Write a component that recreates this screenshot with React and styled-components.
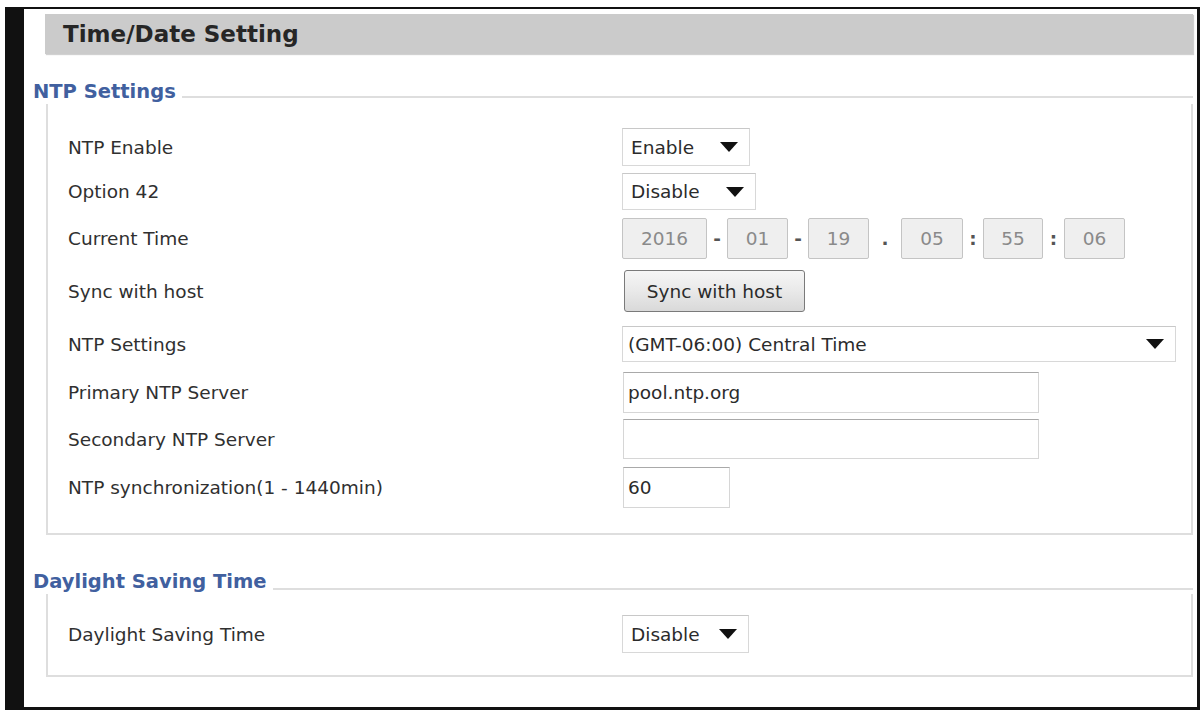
import React from 'react';
import styled, { createGlobalStyle } from 'styled-components';

const GlobalStyle = createGlobalStyle`
  html, body {
    margin: 0;
    padding: 0;
    background: #fff;
  }
  body {
    font-family: "DejaVu Sans", Verdana, sans-serif;
    color: #333;
  }
`;

const Frame = styled.div`
  box-sizing: border-box;
  width: 1195px;
  height: 703px;
  margin: 7px 0 0 5px;
  border-style: solid;
  border-color: #111;
  border-width: 2px 3px 3px 19px;
  padding: 5px 4px 0 9px;
  background: #fff;
`;

const Header = styled.div`
  margin-left: 12px;
  height: 40px;
  display: flex;
  align-items: center;
  padding-left: 18px;
  background: #cbcbcb;
  box-shadow: 1px 1px 1px rgba(0, 0, 0, 0.18);
  font-size: 23px;
  font-weight: bold;
  color: #262626;
`;

const LegendRow = styled.div`
  display: flex;
  align-items: flex-end;
  height: 24px;
  margin-top: ${p => p.$top}px;
`;

const LegendText = styled.div`
  font-size: 19.5px;
  font-weight: bold;
  line-height: 24px;
  color: #41609f;
  white-space: nowrap;
`;

const Rule = styled.div`
  flex: 1;
  margin: 0 0 ${p => p.$lift || 6}px 6px;
  border-bottom: 2px solid #dedede;
`;

const Box = styled.div`
  margin-left: 13px;
  border: 2px solid #dedede;
  border-top: none;
  padding: ${p => p.$top}px 0 ${p => p.$bottom}px 20px;
  display: flex;
  flex-direction: column;
`;

const Row = styled.div`
  display: flex;
  align-items: center;
  margin-top: ${p => p.$gap || 0}px;
`;

const Label = styled.div`
  width: 554px;
  flex-shrink: 0;
  font-size: 18.5px;
  color: #303030;
`;

const SelectBox = styled.div`
  box-sizing: border-box;
  width: ${p => p.$w}px;
  height: ${p => p.$h}px;
  display: flex;
  align-items: center;
  justify-content: space-between;
  padding: 0 11px 0 ${p => p.$left || 8}px;
  border: 1px solid #d8d8d8;
  border-top-color: #c8c8c8;
  background: #fff;
  font-size: 18.5px;
  color: #2b2b2b;
`;

const Caret = () => (
  <svg width="18" height="10" viewBox="0 0 18 10">
    <polygon points="0,0 18,0 9,10" fill="#111" />
  </svg>
);

const Select = ({ value, w, h, left }) => (
  <SelectBox $w={w} $h={h} $left={left}>
    <span>{value}</span>
    <Caret />
  </SelectBox>
);

const TimeRow = styled.div`
  display: flex;
  align-items: center;
`;

const TimeField = styled.div`
  box-sizing: border-box;
  width: ${p => p.$w}px;
  height: 41px;
  display: flex;
  align-items: center;
  justify-content: center;
  border: 1px solid #c4c4c4;
  border-radius: 2px;
  background: #efefef;
  font-size: 18.5px;
  color: #8a8a8a;
`;

const Sep = styled.span`
  width: ${p => p.$w}px;
  text-align: center;
  font-size: 18.5px;
  font-weight: bold;
  color: #555;
`;

const Button = styled.button`
  box-sizing: border-box;
  width: 181px;
  height: 42px;
  margin-left: 2px;
  border: 1px solid #7a7a7a;
  border-radius: 3px;
  background: linear-gradient(#f6f6f6, #e9e9e9 50%, #d9d9d9);
  font-family: "DejaVu Sans", Verdana, sans-serif;
  font-size: 18.5px;
  color: #2b2b2b;
  padding: 0;
`;

const TextInput = styled.input`
  box-sizing: border-box;
  width: ${p => p.$w}px;
  height: ${p => p.$h}px;
  margin: 0 0 0 1px;
  padding: 0 4px;
  border: 1px solid #d6d6d6;
  border-top-color: #a9a9a9;
  outline: none;
  background: #fff;
  font-family: "DejaVu Sans", Verdana, sans-serif;
  font-size: 18.5px;
  color: #2b2b2b;
`;

const timeParts = [
  { v: '2016', w: 85, sep: '-', sw: 20 },
  { v: '01', w: 61, sep: '-', sw: 20 },
  { v: '19', w: 61, sep: '.', sw: 32 },
  { v: '05', w: 62, sep: ':', sw: 20 },
  { v: '55', w: 60, sep: ':', sw: 21 },
  { v: '06', w: 61 },
];

export default function App() {
  return (
    <>
      <GlobalStyle />
      <Frame>
        <Header>Time/Date Setting</Header>

        <LegendRow $top={26}>
          <LegendText>NTP Settings</LegendText>
          <Rule />
        </LegendRow>
        <Box $top={24} $bottom={25}>
          <Row>
            <Label>NTP Enable</Label>
            <Select value="Enable" w={128} h={38} />
          </Row>
          <Row $gap={7}>
            <Label>Option 42</Label>
            <Select value="Disable" w={134} h={37} />
          </Row>
          <Row $gap={8}>
            <Label>Current Time</Label>
            <TimeRow>
              {timeParts.map(p => (
                <React.Fragment key={p.v + p.w}>
                  <TimeField $w={p.w}>{p.v}</TimeField>
                  {p.sep && <Sep $w={p.sw}>{p.sep}</Sep>}
                </React.Fragment>
              ))}
            </TimeRow>
          </Row>
          <Row $gap={11}>
            <Label>Sync with host</Label>
            <Button type="button">Sync with host</Button>
          </Row>
          <Row $gap={14}>
            <Label>NTP Settings</Label>
            <Select value="(GMT-06:00) Central Time" w={554} h={36} left={5} />
          </Row>
          <Row $gap={10}>
            <Label>Primary NTP Server</Label>
            <TextInput $w={416} $h={41} defaultValue="pool.ntp.org" />
          </Row>
          <Row $gap={6}>
            <Label>Secondary NTP Server</Label>
            <TextInput $w={416} $h={40} defaultValue="" />
          </Row>
          <Row $gap={8}>
            <Label>NTP synchronization(1 - 1440min)</Label>
            <TextInput $w={107} $h={41} defaultValue="60" />
          </Row>
        </Box>

        <LegendRow $top={35}>
          <LegendText>Daylight Saving Time</LegendText>
          <Rule $lift={4} />
        </LegendRow>
        <Box $top={21} $bottom={22}>
          <Row>
            <Label>Daylight Saving Time</Label>
            <Select value="Disable" w={127} h={38} />
          </Row>
        </Box>
      </Frame>
    </>
  );
}
